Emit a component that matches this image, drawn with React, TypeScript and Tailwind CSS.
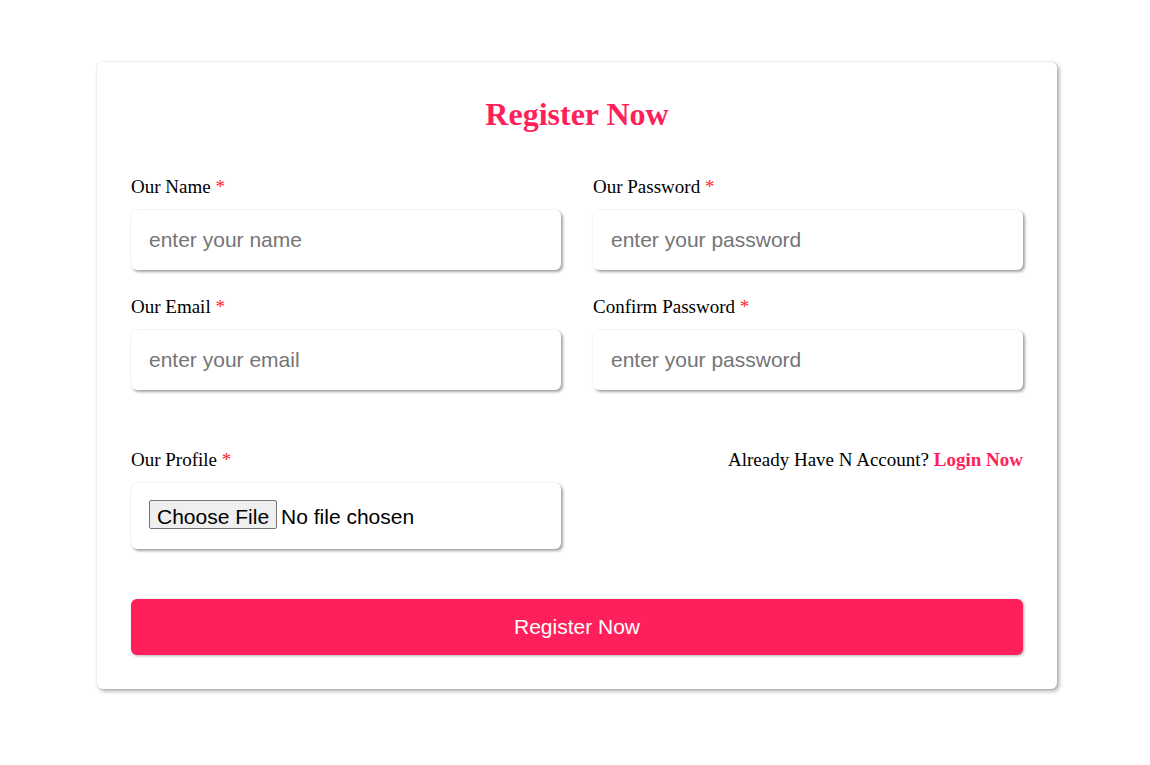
const Field = ({ label, type, placeholder }: { label: string; type: string; placeholder: string }) => {
  return (
    <div className="flex flex-col">
      <label className="text-[19px] leading-[22px] text-black">
        {label} <span className="text-[#ff1f1f]">*</span>
      </label>
      <input
        type={type}
        placeholder={placeholder}
        className="mt-3 h-[60px] w-full rounded-[6px] bg-white px-[18px] text-[21px] outline-none placeholder:text-[#757575] shadow-[0_0_2px_rgba(0,0,0,0.12),2px_2px_3px_rgba(0,0,0,0.35)]"
        style={{ fontFamily: "'Liberation Sans', Arial, sans-serif" }}
      />
    </div>
  );
};

export default function App() {
  return (
    <div className="flex min-h-[765px] w-full justify-center bg-white pl-1 pt-[62px]" style={{ fontFamily: "'Liberation Serif', 'Times New Roman', serif" }}>
      <div className="h-fit w-[960px] rounded-[6px] bg-white p-[34px] shadow-[0_0_2px_rgba(0,0,0,0.12),2px_2px_4px_rgba(0,0,0,0.35)]">
        <h2 className="text-center text-[32px] font-bold leading-[37px] text-[#ff1f5a]">Register Now</h2>

        <div className="mt-[43px] grid grid-cols-2 gap-x-8 gap-y-[26px]">
          <Field label="Our Name" type="text" placeholder="enter your name" />
          <Field label="Our Password" type="password" placeholder="enter your password" />
          <Field label="Our Email" type="email" placeholder="enter your email" />
          <Field label="Confirm Password" type="password" placeholder="enter your password" />
        </div>

        <div className="mt-[59px] grid grid-cols-2 gap-x-8">
          <div className="flex flex-col">
            <label className="text-[19px] leading-[22px] text-black">
              Our Profile <span className="text-[#ff1f1f]">*</span>
            </label>
            <div className="mt-3 flex h-[66px] items-center rounded-[6px] bg-white px-[18px] shadow-[0_0_2px_rgba(0,0,0,0.12),2px_2px_3px_rgba(0,0,0,0.35)]">
              <input
                type="file"
                className="text-[21px] text-black file:mr-[4px] file:h-[29px] file:rounded-[2px] file:border file:border-solid file:border-[#767676] file:bg-[#efefef] file:px-[7px] file:text-[21px] file:text-black"
                style={{ fontFamily: "'Liberation Sans', Arial, sans-serif" }}
              />
            </div>
          </div>
          <div className="text-right text-[19px] leading-[22px] text-black">
            Already Have N Account? <a href="#" className="font-bold text-[#ff1f5a]">Login Now</a>
          </div>
        </div>

        <button
          className="mt-[50px] h-[56px] w-full rounded-[6px] bg-[#ff1f5a] text-[21px] text-white shadow-[1px_1px_3px_rgba(0,0,0,0.3)]"
          style={{ fontFamily: "'Liberation Sans', Arial, sans-serif" }}
        >
          Register Now
        </button>
      </div>
    </div>
  );
}
